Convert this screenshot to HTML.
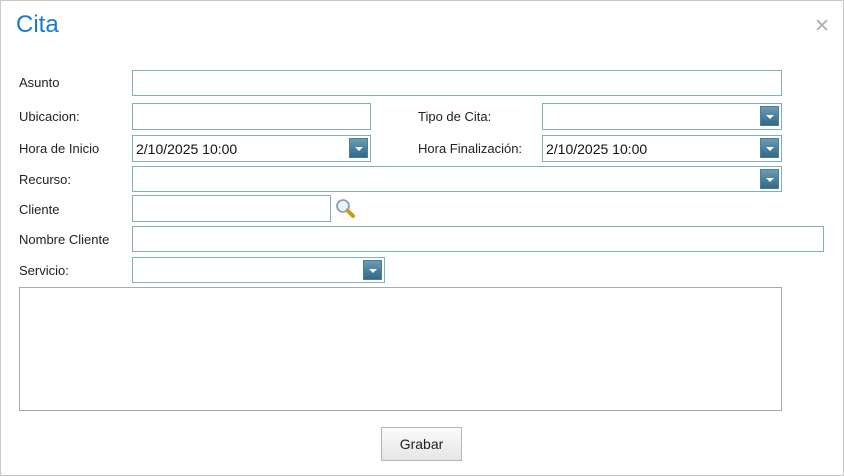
<!DOCTYPE html>
<html><head><meta charset="utf-8"><style>
*{box-sizing:border-box;margin:0;padding:0}
body{width:844px;height:476px;background:#fff;font-family:"Segoe UI","Liberation Sans",sans-serif;position:relative;overflow:hidden}
.frame{position:absolute;left:0;top:0;width:844px;height:476px;border:1px solid #c8c8c8}
.title{position:absolute;left:16px;top:11px;font-size:24px;color:#1a7ac8}
.close{position:absolute;left:814px;top:14px;font-size:19px;color:#b0b0b0;line-height:24px;font-family:"DejaVu Sans",sans-serif;font-weight:200}
.l{position:absolute;left:19px;font-size:13px;color:#222}
.i{position:absolute;border:1px solid #7fb3b3;background:#fff;font-size:14px;color:#111;padding:5px 0 0 3px}
.dd{position:absolute;right:2px;top:2px;width:19px;height:20px;background:linear-gradient(#6c9ab4,#2f6a87);border:1px solid #4a7f98}
.dd:after{content:"";position:absolute;left:5px;top:8px;border-left:4px solid transparent;border-right:4px solid transparent;border-top:4px solid #fff}
.btn{position:absolute;left:381px;top:427px;width:81px;height:34px;border:1px solid #b5b5b5;background:linear-gradient(#fafafa,#e6e6e6);font-size:14px;text-align:center;line-height:32px;color:#222}
</style></head><body>
<div class="frame"></div>
<div class="title">Cita</div>
<div class="close">✕</div>

<div class="l" style="top:75px">Asunto</div>
<div class="i" style="left:132px;top:70px;width:650px;height:26px"></div>

<div class="l" style="top:109px">Ubicacion:</div>
<div class="i" style="left:132px;top:103px;width:239px;height:27px"></div>
<div class="l" style="left:418px;top:109px">Tipo de Cita:</div>
<div class="i" style="left:542px;top:103px;width:240px;height:27px"><div class="dd"></div></div>

<div class="l" style="top:141px">Hora de Inicio</div>
<div class="i" style="left:132px;top:135px;width:239px;height:27px">2/10/2025 10:00<div class="dd"></div></div>
<div class="l" style="left:418px;top:141px">Hora Finalización:</div>
<div class="i" style="left:542px;top:135px;width:240px;height:27px">2/10/2025 10:00<div class="dd"></div></div>

<div class="l" style="top:172px">Recurso:</div>
<div class="i" style="left:132px;top:166px;width:650px;height:26px"><div class="dd" style="top:2px;height:20px"></div></div>

<div class="l" style="top:202px">Cliente</div>
<div class="i" style="left:132px;top:195px;width:199px;height:27px"></div>
<svg style="position:absolute;left:335px;top:198px" width="22" height="22" viewBox="0 0 22 22">
<circle cx="8" cy="8" r="6" fill="#e8f3fb" stroke="#7f97aa" stroke-width="1.6"/>
<line x1="12.5" y1="12.5" x2="18" y2="18" stroke="#c79a1c" stroke-width="4" stroke-linecap="round"/>
</svg>

<div class="l" style="top:232px">Nombre Cliente</div>
<div class="i" style="left:132px;top:226px;width:692px;height:26px"></div>

<div class="l" style="top:263px">Servicio:</div>
<div class="i" style="left:132px;top:257px;width:253px;height:26px"><div class="dd" style="height:20px"></div></div>

<div class="i" style="left:19px;top:287px;width:763px;height:124px;border-color:#aaa"></div>

<div class="btn">Grabar</div>
</body></html>
